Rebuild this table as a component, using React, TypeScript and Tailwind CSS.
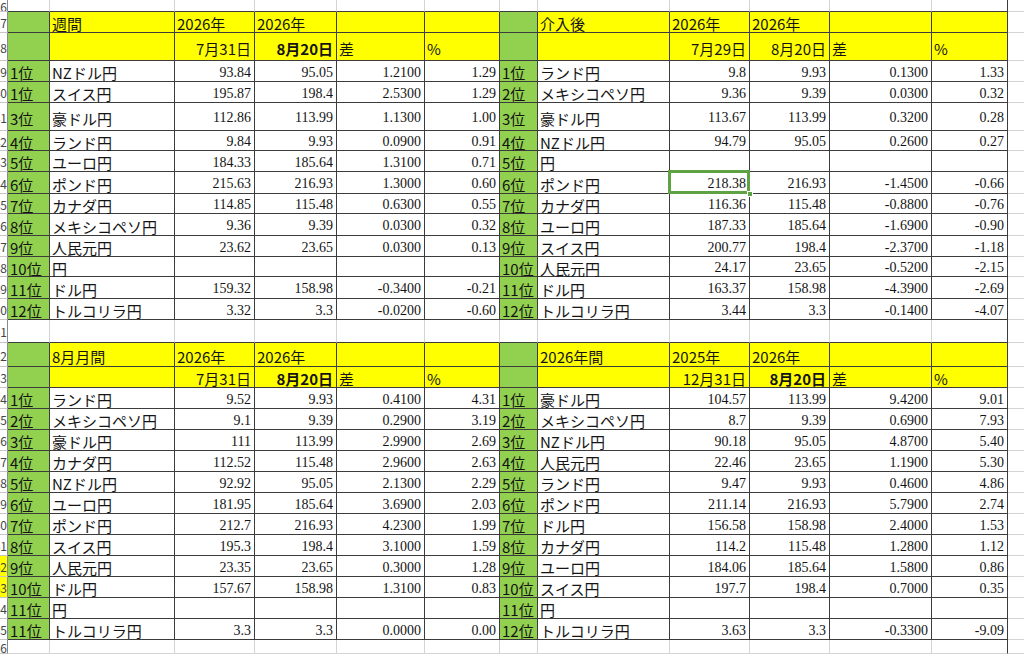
import React from 'react';

type Row = [string, string, string, string, string, string];

interface Block {
  title: string;
  y1: string;
  y2: string;
  d1: string;
  d2: string;
  d2Bold: boolean;
  rows: Row[];
}

const topLeft: Block = {
  title: '週間',
  y1: '2026年',
  y2: '2026年',
  d1: '7月31日',
  d2: '8月20日',
  d2Bold: true,
  rows: [
    ['1位', 'NZドル円', '93.84', '95.05', '1.2100', '1.29'],
    ['1位', 'スイス円', '195.87', '198.4', '2.5300', '1.29'],
    ['3位', '豪ドル円', '112.86', '113.99', '1.1300', '1.00'],
    ['4位', 'ランド円', '9.84', '9.93', '0.0900', '0.91'],
    ['5位', 'ユーロ円', '184.33', '185.64', '1.3100', '0.71'],
    ['6位', 'ポンド円', '215.63', '216.93', '1.3000', '0.60'],
    ['7位', 'カナダ円', '114.85', '115.48', '0.6300', '0.55'],
    ['8位', 'メキシコペソ円', '9.36', '9.39', '0.0300', '0.32'],
    ['9位', '人民元円', '23.62', '23.65', '0.0300', '0.13'],
    ['10位', '円', '', '', '', ''],
    ['11位', 'ドル円', '159.32', '158.98', '-0.3400', '-0.21'],
    ['12位', 'トルコリラ円', '3.32', '3.3', '-0.0200', '-0.60'],
  ],
};

const topRight: Block = {
  title: '介入後',
  y1: '2026年',
  y2: '2026年',
  d1: '7月29日',
  d2: '8月20日',
  d2Bold: false,
  rows: [
    ['1位', 'ランド円', '9.8', '9.93', '0.1300', '1.33'],
    ['2位', 'メキシコペソ円', '9.36', '9.39', '0.0300', '0.32'],
    ['3位', '豪ドル円', '113.67', '113.99', '0.3200', '0.28'],
    ['4位', 'NZドル円', '94.79', '95.05', '0.2600', '0.27'],
    ['5位', '円', '', '', '', ''],
    ['6位', 'ポンド円', '218.38', '216.93', '-1.4500', '-0.66'],
    ['7位', 'カナダ円', '116.36', '115.48', '-0.8800', '-0.76'],
    ['8位', 'ユーロ円', '187.33', '185.64', '-1.6900', '-0.90'],
    ['9位', 'スイス円', '200.77', '198.4', '-2.3700', '-1.18'],
    ['10位', '人民元円', '24.17', '23.65', '-0.5200', '-2.15'],
    ['11位', 'ドル円', '163.37', '158.98', '-4.3900', '-2.69'],
    ['12位', 'トルコリラ円', '3.44', '3.3', '-0.1400', '-4.07'],
  ],
};

const bottomLeft: Block = {
  title: '8月月間',
  y1: '2026年',
  y2: '2026年',
  d1: '7月31日',
  d2: '8月20日',
  d2Bold: true,
  rows: [
    ['1位', 'ランド円', '9.52', '9.93', '0.4100', '4.31'],
    ['2位', 'メキシコペソ円', '9.1', '9.39', '0.2900', '3.19'],
    ['3位', '豪ドル円', '111', '113.99', '2.9900', '2.69'],
    ['4位', 'カナダ円', '112.52', '115.48', '2.9600', '2.63'],
    ['5位', 'NZドル円', '92.92', '95.05', '2.1300', '2.29'],
    ['6位', 'ユーロ円', '181.95', '185.64', '3.6900', '2.03'],
    ['7位', 'ポンド円', '212.7', '216.93', '4.2300', '1.99'],
    ['8位', 'スイス円', '195.3', '198.4', '3.1000', '1.59'],
    ['9位', '人民元円', '23.35', '23.65', '0.3000', '1.28'],
    ['10位', 'ドル円', '157.67', '158.98', '1.3100', '0.83'],
    ['11位', '円', '', '', '', ''],
    ['11位', 'トルコリラ円', '3.3', '3.3', '0.0000', '0.00'],
  ],
};

const bottomRight: Block = {
  title: '2026年間',
  y1: '2025年',
  y2: '2026年',
  d1: '12月31日',
  d2: '8月20日',
  d2Bold: true,
  rows: [
    ['1位', '豪ドル円', '104.57', '113.99', '9.4200', '9.01'],
    ['2位', 'メキシコペソ円', '8.7', '9.39', '0.6900', '7.93'],
    ['3位', 'NZドル円', '90.18', '95.05', '4.8700', '5.40'],
    ['4位', '人民元円', '22.46', '23.65', '1.1900', '5.30'],
    ['5位', 'ランド円', '9.47', '9.93', '0.4600', '4.86'],
    ['6位', 'ポンド円', '211.14', '216.93', '5.7900', '2.74'],
    ['7位', 'ドル円', '156.58', '158.98', '2.4000', '1.53'],
    ['8位', 'カナダ円', '114.2', '115.48', '1.2800', '1.12'],
    ['9位', 'ユーロ円', '184.06', '185.64', '1.5800', '0.86'],
    ['10位', 'スイス円', '197.7', '198.4', '0.7000', '0.35'],
    ['11位', '円', '', '', '', ''],
    ['12位', 'トルコリラ円', '3.63', '3.3', '-0.3300', '-9.09'],
  ],
};

// column widths, left → right (last column fills the rest)
const W = [
  'w-[8px]',
  'w-[42px]',
  'w-[125px]',
  'w-[80px]',
  'w-[82px]',
  'w-[88px]',
  'w-[75px]',
  'w-[38px]',
  'w-[132px]',
  'w-[80px]',
  'w-[80px]',
  'w-[102px]',
  'w-[76px]',
];

const H: Record<number, string> = {
  12: 'h-[12px]',
  14: 'h-[14px]',
  20: 'h-[20px]',
  21: 'h-[21px]',
  22: 'h-[22px]',
  23: 'h-[23px]',
  24: 'h-[24px]',
  28: 'h-[28px]',
};

const sans = "font-['Noto_Sans_CJK_JP',sans-serif]";
const serif = "font-['Liberation_Serif',serif]";

const RowHead: React.FC<{ num: number; hl?: boolean }> = ({ num, hl }) => (
  <div
    className={`${W[0]} shrink-0 h-full flex items-center justify-end overflow-hidden border-r border-b border-r-[#8a8a8a] border-b-[#c6c6c6] ${
      hl ? 'bg-[#ffff00]' : 'bg-white'
    }`}
  >
    <span className={`${sans} text-[12px] leading-none text-[#444] pt-[2px]`}>{num}</span>
  </div>
);

const Rest: React.FC = () => (
  <div className="flex-1 min-w-0 h-full border-b border-[#d4d4d4] bg-white" />
);

interface CellProps {
  col: number;
  bg?: 'green' | 'yellow' | 'white';
  text?: string;
  right?: boolean;
  num?: boolean;
  bold?: boolean;
  children?: React.ReactNode;
}

const Cell: React.FC<CellProps> = ({ col, bg = 'white', text, right, num, bold, children }) => {
  const bgc = bg === 'green' ? 'bg-[#92d050]' : bg === 'yellow' ? 'bg-[#ffff00]' : 'bg-white';
  return (
    <div
      className={`${W[col]} shrink-0 h-full relative flex items-center pt-[3px] whitespace-nowrap border-r border-b border-[#3c3c3c] ${bgc} ${
        right ? 'justify-end pr-[3px]' : 'justify-start pl-[2px]'
      }`}
    >
      {text ? (
        <span
          className={`${num ? `${serif} text-[14px]` : `${sans} text-[15px]`} leading-none text-[#141414] ${
            bold ? 'font-bold' : ''
          }`}
        >
          {text}
        </span>
      ) : null}
      {children}
    </div>
  );
};

const BlankRow: React.FC<{ h: number; num: number; darkBottom: boolean }> = ({ h, num, darkBottom }) => (
  <div className={`${H[h]} flex`}>
    <RowHead num={num} />
    {W.slice(1).map((w, i) => (
      <div
        key={i}
        className={`${w} shrink-0 h-full bg-white border-r border-b ${
          i === W.length - 2 ? 'border-r-[#3c3c3c]' : 'border-r-[#d4d4d4]'
        } ${darkBottom ? 'border-b-[#3c3c3c]' : 'border-b-[#d4d4d4]'}`}
      />
    ))}
    <Rest />
  </div>
);

const Header1: React.FC<{ h: number; num: number; l: Block; r: Block }> = ({ h, num, l, r }) => (
  <div className={`${H[h]} flex`}>
    <RowHead num={num} />
    <Cell col={1} bg="green" />
    <Cell col={2} bg="yellow" text={l.title} />
    <Cell col={3} bg="yellow" text={l.y1} />
    <Cell col={4} bg="yellow" text={l.y2} />
    <Cell col={5} bg="yellow" />
    <Cell col={6} bg="yellow" />
    <Cell col={7} bg="green" />
    <Cell col={8} bg="yellow" text={r.title} />
    <Cell col={9} bg="yellow" text={r.y1} />
    <Cell col={10} bg="yellow" text={r.y2} />
    <Cell col={11} bg="yellow" />
    <Cell col={12} bg="yellow" />
    <Rest />
  </div>
);

const Header2: React.FC<{ h: number; num: number; l: Block; r: Block }> = ({ h, num, l, r }) => (
  <div className={`${H[h]} flex`}>
    <RowHead num={num} />
    <Cell col={1} bg="green" />
    <Cell col={2} bg="yellow" />
    <Cell col={3} bg="yellow" text={l.d1} right />
    <Cell col={4} bg="yellow" text={l.d2} right bold={l.d2Bold} />
    <Cell col={5} bg="yellow" text="差" />
    <Cell col={6} bg="yellow" text="%" />
    <Cell col={7} bg="green" />
    <Cell col={8} bg="yellow" />
    <Cell col={9} bg="yellow" text={r.d1} right />
    <Cell col={10} bg="yellow" text={r.d2} right bold={r.d2Bold} />
    <Cell col={11} bg="yellow" text="差" />
    <Cell col={12} bg="yellow" text="%" />
    <Rest />
  </div>
);

const DataRow: React.FC<{
  h: number;
  num: number;
  l: Row;
  r: Row;
  hl?: boolean;
  selected?: boolean;
}> = ({ h, num, l, r, hl, selected }) => (
  <div className={`${H[h]} flex ${selected ? 'relative z-10' : ''}`}>
    <RowHead num={num} hl={hl} />
    <Cell col={1} bg="green" text={l[0]} />
    <Cell col={2} text={l[1]} />
    <Cell col={3} text={l[2]} right num />
    <Cell col={4} text={l[3]} right num />
    <Cell col={5} text={l[4]} right num />
    <Cell col={6} text={l[5]} right num />
    <Cell col={7} bg="green" text={r[0]} />
    <Cell col={8} text={r[1]} />
    <Cell col={9} text={r[2]} right num>
      {selected && (
        <>
          <div className="absolute z-10 -left-[2px] -top-[2px] -right-[1px] -bottom-[1px] border-[3px] border-[#5fa243] pointer-events-none" />
          <div className="absolute z-20 -right-[4px] -bottom-[4px] w-[6px] h-[6px] bg-[#5fa243] border border-white" />
        </>
      )}
    </Cell>
    <Cell col={10} text={r[3]} right num />
    <Cell col={11} text={r[4]} right num />
    <Cell col={12} text={r[5]} right num />
    <Rest />
  </div>
);

const topHeights = [21, 21, 28, 20, 21, 22, 20, 22, 21, 20, 22, 21];

const App: React.FC = () => {
  return (
    <div className="w-[1024px] h-[654px] overflow-hidden bg-white flex flex-col">
      <BlankRow h={12} num={36} darkBottom />
      <Header1 h={21} num={37} l={topLeft} r={topRight} />
      <Header2 h={28} num={38} l={topLeft} r={topRight} />
      {topLeft.rows.map((row, i) => (
        <DataRow
          key={`t${i}`}
          h={topHeights[i]}
          num={39 + i}
          l={row}
          r={topRight.rows[i]}
          selected={i === 5}
        />
      ))}
      <BlankRow h={23} num={51} darkBottom />
      <Header1 h={24} num={52} l={bottomLeft} r={bottomRight} />
      <Header2 h={21} num={53} l={bottomLeft} r={bottomRight} />
      {bottomLeft.rows.map((row, i) => (
        <DataRow
          key={`b${i}`}
          h={21}
          num={54 + i}
          l={row}
          r={bottomRight.rows[i]}
          hl={i === 8 || i === 9}
        />
      ))}
      <BlankRow h={14} num={66} darkBottom={false} />
    </div>
  );
};

export default App;
